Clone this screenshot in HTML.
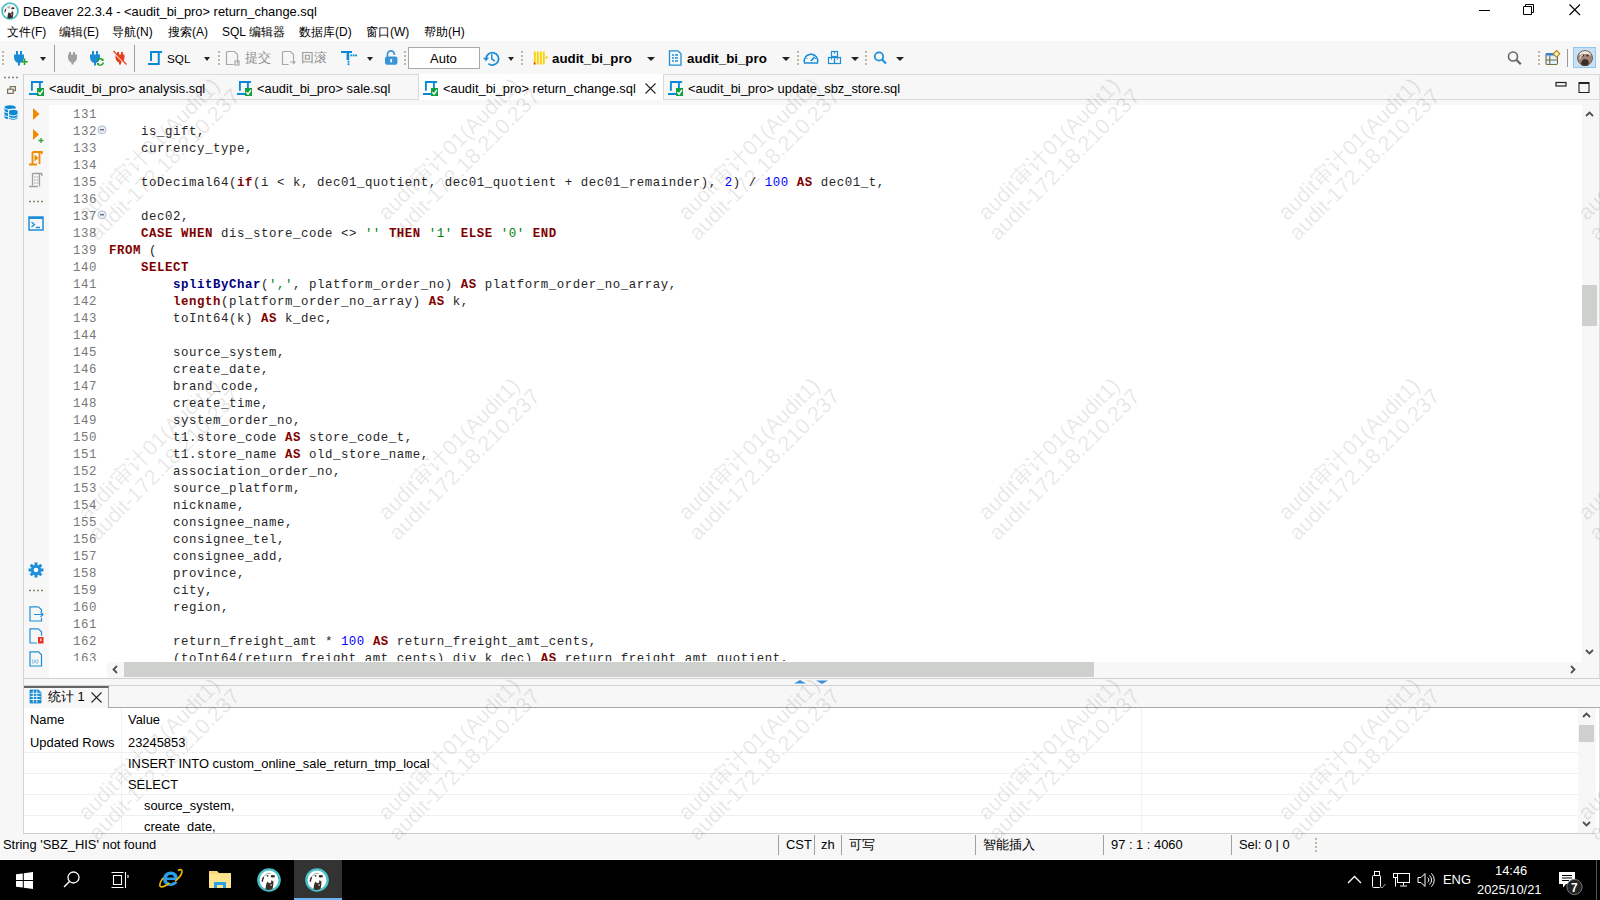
<!DOCTYPE html>
<html><head><meta charset="utf-8">
<style>
*{margin:0;padding:0;box-sizing:border-box}
html,body{width:1600px;height:900px;overflow:hidden;background:#fff;font-family:"Liberation Sans",sans-serif;font-size:12px;color:#000}
body{position:relative}
.a{position:absolute}
.t{position:absolute;white-space:pre;line-height:14px}
svg{position:absolute;overflow:visible}
.cl{position:absolute;left:0;height:17px;font-family:"Liberation Mono",monospace;font-size:12.4px;letter-spacing:0.56px;line-height:17px;white-space:pre;color:#262626}
.lnum{position:absolute;left:73px;color:#787878}
.ctext{position:absolute;left:109px}
.k{color:#7f0055;font-weight:bold}
.k{color:#800000}
.f{color:#000080;font-weight:bold}
.n{color:#0000ff}
.s{color:#008000}
.sep{position:absolute;width:1px;background:#a0a0a0}
.grip{position:absolute;width:2px;height:14px;background-image:linear-gradient(#c2b7a3 50%,transparent 50%);background-size:2px 4px}
.dd{position:absolute;width:0;height:0;border-left:4px solid transparent;border-right:4px solid transparent;border-top:4px solid #222}
.wm{position:absolute;width:300px;height:50px;text-align:center;font-size:21.5px;line-height:22px;color:rgba(0,0,0,0.1);transform:rotate(-45deg);white-space:nowrap;pointer-events:none}
</style></head><body>
<!-- title bar -->
<svg style="left:1px;top:2px" width="18" height="18" viewBox="0 0 24 24"><circle cx="12" cy="12" r="10.6" fill="#fff" stroke="#4cc0c8" stroke-width="2.4"/><path d="M8.5 21.5c.2-3 .6-5.8 1.8-7.8 1.2 1 2.3 1.5 3.3 1.6l1.2-3.5.6 1.5.9-.8c.3 2.5 0 5.5-.8 8.5-2.3 1-4.8 1.3-7 .5z" fill="#3b2e26"/><path d="M13.6 16.2l1.3.2-.2 1.4-1.2-.2z" fill="#fff"/><ellipse cx="15.8" cy="8.2" rx="2.2" ry="1.3" fill="#3b2e26"/><circle cx="10.6" cy="7.8" r="0.9" fill="#3b2e26"/><path d="M4.8 14c-.4-2.2.2-4.2 1.8-5.5l.6 1.2c-.8 1.2-1.2 2.6-1.2 4z" fill="#3b2e26"/><path d="M7 8.5c1.5-2.5 4-3.5 6.5-3" fill="none" stroke="#8a8a8a" stroke-width="0.8"/></svg>
<div class="t" style="left:23px;top:5px;font-size:12.9px">DBeaver 22.3.4 - &lt;audit_bi_pro&gt; return_change.sql</div>
<svg style="left:1479px;top:10px" width="12" height="2"><rect x="0" y="0" width="11" height="1" fill="#000"/></svg>
<svg style="left:1523px;top:4px" width="12" height="12"><path d="M0.5 2.5h8v8h-8z M2.5 2.5v-2h8v8h-2" fill="none" stroke="#000" stroke-width="1"/></svg>
<svg style="left:1569px;top:4px" width="12" height="12"><path d="M0.5 0.5L11 11M11 0.5L0.5 11" stroke="#000" stroke-width="1.1"/></svg>
<!-- menu -->
<div class="t" style="left:7px;top:25px">文件(F)</div>
<div class="t" style="left:59px;top:25px">编辑(E)</div>
<div class="t" style="left:112px;top:25px">导航(N)</div>
<div class="t" style="left:168px;top:25px">搜索(A)</div>
<div class="t" style="left:222px;top:25px">SQL 编辑器</div>
<div class="t" style="left:299px;top:25px">数据库(D)</div>
<div class="t" style="left:366px;top:25px">窗口(W)</div>
<div class="t" style="left:424px;top:25px">帮助(H)</div>
<!-- toolbar -->
<div class="a" style="left:0;top:41px;width:1600px;height:33px;background:#f7f7f7"></div>
<div class="grip" style="left:2px;top:51px"></div>
<svg style="left:13px;top:50px" width="16" height="16"><rect x="3" y="1" width="2" height="4" fill="#1a8bd5"/><rect x="7" y="1" width="2" height="4" fill="#1a8bd5"/><path d="M1 4.5h10v3c0 3-2 5-4 5.5v2.5h-2v-2.5c-2-.5-4-2.5-4-5.5z" fill="#1a8bd5"/><path d="M11.5 8.5v6.5M8.2 11.8h6.6" stroke="#22a52a" stroke-width="1.6"/></svg>
<div class="dd" style="left:40px;top:57px;border-left-width:3.5px;border-right-width:3.5px"></div>
<div class="sep" style="left:54px;top:45px;height:27px"></div>
<svg style="left:66px;top:50px" width="16" height="16"><rect x="3" y="2" width="2" height="3" fill="#a0a0a0"/><rect x="7" y="2" width="2" height="3" fill="#a0a0a0"/><path d="M2 4.5h9v3c0 3-2 4.5-3.5 5v2h-2v-2c-1.5-.5-3.5-2-3.5-5z" fill="#a0a0a0"/></svg>
<svg style="left:89px;top:50px" width="16" height="16"><rect x="3" y="1" width="2" height="4" fill="#1a8bd5"/><rect x="7" y="1" width="2" height="4" fill="#1a8bd5"/><path d="M1 4.5h10v3c0 3-2 5-4 5.5v2.5h-2v-2.5c-2-.5-4-2.5-4-5.5z" fill="#1a8bd5"/><path d="M8 11.5a3.5 3.5 0 0 1 6-1.5M14.5 12.5a3.5 3.5 0 0 1-6 1.5" fill="none" stroke="#22a52a" stroke-width="1.4"/><path d="M14.5 8.5v2.5h-2.5z M8 15.5v-2.5h2.5z" fill="#22a52a"/></svg>
<svg style="left:112px;top:50px" width="16" height="16"><rect x="5" y="2" width="2" height="3" fill="#e8401c"/><rect x="9" y="2" width="2" height="3" fill="#e8401c"/><path d="M3.5 4.5h9v3c0 3-2 4.5-3.5 5v2h-2v-2c-1.5-.5-3.5-2-3.5-5z" fill="#e8401c"/><path d="M1 1.5L14 15" stroke="#f7f7f7" stroke-width="1.6"/><path d="M1.5 1L14.5 14.5" stroke="#e8401c" stroke-width="1.2"/></svg>
<div class="sep" style="left:134px;top:45px;height:27px"></div>
<svg style="left:147px;top:50px" width="16" height="16"><path d="M4 11V2.1H14.6M11.75 2.1V14.8M1 13.9h11.7" fill="none" stroke="#0a8ad6" stroke-width="2"/><path d="M14 1l1.6 1.1-1.6 1.3z" fill="#0a8ad6"/></svg>
<div class="t" style="left:167px;top:52px;font-size:11.7px">SQL</div>
<div class="dd" style="left:204px;top:57px;border-left-width:3.5px;border-right-width:3.5px"></div>
<div class="grip" style="left:218px;top:51px"></div>
<svg style="left:225px;top:50px" width="16" height="16"><path d="M1.5 1.5h8l3 3v9M1.5 1.5v13h7" fill="none" stroke="#a8a8a8" stroke-width="1.2"/><rect x="10" y="11" width="4" height="4" fill="none" stroke="#a8a8a8" stroke-width="1.2"/></svg>
<div class="t" style="left:245px;top:51px;font-size:12.5px;color:#8c8c8c">提交</div>
<svg style="left:281px;top:50px" width="16" height="16"><path d="M1.5 1.5h8l3 3v5M1.5 1.5v13h6" fill="none" stroke="#a8a8a8" stroke-width="1.2"/><path d="M9 12h5M12 10l2 2-2 2M9.5 15" fill="none" stroke="#a8a8a8" stroke-width="1.1"/></svg>
<div class="t" style="left:301px;top:51px;font-size:12.5px;color:#8c8c8c">回滚</div>
<svg style="left:340px;top:50px" width="17" height="16"><rect x="1" y="1" width="11" height="2" fill="#0a8ad6"/><rect x="6.6" y="1" width="2.6" height="9" fill="#0a8ad6"/><g fill="#0a8ad6"><rect x="7.6" y="10.8" width="1.8" height="1.8"/><rect x="7.6" y="13.3" width="1.8" height="1.8"/><rect x="10.4" y="4.5" width="1.8" height="1.8"/><rect x="12.8" y="4.5" width="1.8" height="1.8"/><rect x="15.2" y="4.5" width="1.8" height="1.8"/></g></svg>
<div class="dd" style="left:367px;top:57px;border-left-width:3.5px;border-right-width:3.5px"></div>
<svg style="left:384px;top:50px" width="14" height="16"><path d="M3.5 7v-2.8a3.4 3.4 0 0 1 6.8 0v.8" fill="none" stroke="#3a94d8" stroke-width="1.7"/><rect x="1" y="6.4" width="12.4" height="8.4" rx="2" fill="#3a94d8"/><rect x="6.3" y="9" width="1.8" height="3.2" fill="#fff"/></svg>
<div class="grip" style="left:404px;top:51px"></div>
<div class="a" style="left:408px;top:47px;width:72px;height:22px;background:#fff;border:1px solid #a8a8a8"></div>
<div class="t" style="left:430px;top:52px;font-size:13px">Auto</div>
<svg style="left:483px;top:50px" width="18" height="16"><path d="M3.2 9a6.2 6.2 0 1 1 2.2 4.6" fill="none" stroke="#1d8fd8" stroke-width="1.8"/><path d="M0 7.8h6l-3 3.5z" fill="#1d8fd8"/><path d="M8.8 4.2v4.6l3 2.4" fill="none" stroke="#1d8fd8" stroke-width="1.5"/></svg>
<div class="dd" style="left:508px;top:57px;border-left-width:3.5px;border-right-width:3.5px"></div>
<div class="grip" style="left:521px;top:51px"></div>
<svg style="left:533px;top:50px" width="16" height="16"><path d="M1.8 1.5v13M4.8 1.5v13M7.8 1.5v13M10.8 1.5v13" stroke="#fcd200" stroke-width="1.9"/><rect x="0.8" y="12.5" width="1.5" height="2" fill="#e02020"/><rect x="12.5" y="6.5" width="2" height="2" fill="#f5c400"/></svg>
<div class="t" style="left:552px;top:52px;font-size:13.3px;font-weight:bold">audit_bi_pro</div>
<div class="dd" style="left:647px;top:57px"></div>
<svg style="left:668px;top:50px" width="16" height="16"><path d="M1.5 0.8h8.5l3 3v11.4h-11.5z" fill="none" stroke="#1d8fd8" stroke-width="1.3"/><path d="M4 5h2M7 5h3M4 8h2M7 8h3M4 11h2M7 11h3" stroke="#1d8fd8" stroke-width="1.3"/></svg>
<div class="t" style="left:687px;top:52px;font-size:13.3px;font-weight:bold">audit_bi_pro</div>
<div class="dd" style="left:782px;top:57px"></div>
<div class="grip" style="left:797px;top:51px"></div>
<svg style="left:803px;top:50px" width="16" height="16"><path d="M1.5 13a6.8 6.8 0 1 1 13 0z" fill="none" stroke="#1d8fd8" stroke-width="1.5"/><path d="M8 11l3.5-4" stroke="#1d8fd8" stroke-width="1.8"/><path d="M3.5 8.5h1M12 8.5h1M8 3.5v1M5 5l.7.7M11 5l-.7.7" stroke="#1d8fd8" stroke-width="1"/></svg>
<svg style="left:827px;top:50px" width="16" height="16"><rect x="4.5" y="1.5" width="6" height="5" fill="none" stroke="#1d8fd8" stroke-width="1.2"/><rect x="1.5" y="7.5" width="6" height="6" fill="none" stroke="#1d8fd8" stroke-width="1.2"/><rect x="7.5" y="7.5" width="6" height="6" fill="none" stroke="#1d8fd8" stroke-width="1.2"/><path d="M7.5 1.5v2M4.5 7.5v2M10.5 7.5v2" stroke="#1d8fd8" stroke-width="1.2"/></svg>
<div class="dd" style="left:851px;top:57px"></div>
<div class="grip" style="left:865px;top:51px"></div>
<svg style="left:873px;top:50px" width="16" height="16"><circle cx="6" cy="6.5" r="4.2" fill="none" stroke="#1d8fd8" stroke-width="1.8"/><path d="M9 9.5l4 4" stroke="#1d8fd8" stroke-width="2.2"/></svg>
<div class="dd" style="left:896px;top:57px"></div>
<svg style="left:1507px;top:50px" width="16" height="16"><circle cx="6" cy="6.5" r="4.5" fill="none" stroke="#666" stroke-width="1.6"/><path d="M9.3 9.8l4.5 4.5" stroke="#666" stroke-width="2.2"/></svg>
<div class="grip" style="left:1538px;top:51px"></div>
<svg style="left:1545px;top:50px" width="16" height="16"><rect x="1" y="3.5" width="11.5" height="11" rx="1.2" fill="#dff0fa" stroke="#7a6a48" stroke-width="1.1"/><rect x="1" y="3" width="9" height="2.5" fill="#3a80d0"/><path d="M1 10h11.5M4.8 5.5v9" stroke="#7a6a48" stroke-width="1.1"/><path d="M11.5 0.5l3.3 3.3-3.3 3.3-3.3-3.3z" fill="#fff4c8" stroke="#b08a10" stroke-width="1.1"/></svg>
<div class="sep" style="left:1567px;top:49px;height:18px;background:#999"></div>
<div class="a" style="left:1573px;top:47px;width:23px;height:21px;background:#c8e0f4;border:1px solid #90c8f0"></div>
<svg style="left:1577px;top:50px" width="16" height="16"><circle cx="8" cy="8" r="7.5" fill="#a08676"/><path d="M1.5 6c1-3.5 3.5-5.5 6.5-5.5s5.5 2 6.5 5.5c-2-1.5-4-2-6.5-2s-4.5.5-6.5 2z" fill="#efe6da"/><path d="M4 15c0-3 1-5 3-6l4 1c1 2 1 4 0 5.5-2 .8-5 .8-7-.5z" fill="#3a2c24"/><circle cx="6" cy="5.5" r="1" fill="#222"/><circle cx="10.5" cy="5.5" r="1" fill="#222"/><path d="M3 9c0-2 1-3.5 3-4" fill="none" stroke="#fff" stroke-width="1"/><circle cx="8" cy="8" r="7.5" fill="none" stroke="#5a4a40" stroke-width="0.8"/></svg>

<!-- tabs row -->
<div class="a" style="left:24px;top:74px;width:1576px;height:26px;background:#f7f7f7;border-top:1px solid #dadada;border-bottom:1px solid #dadada"></div>
<div class="a" style="left:418px;top:74px;width:246px;height:27px;background:#fff;border-left:1px solid #dadada;border-right:1px solid #dadada"></div>
<svg style="left:28px;top:79px" width="17" height="17"><path d="M3.9 11.8V3H14.6M11.9 3v6.5M1 15h8.5" fill="none" stroke="#0a8ad6" stroke-width="1.9"/><path d="M14 2l1.6 1-1.6 1.2z" fill="#0a8ad6"/><rect x="9" y="9" width="7" height="8" fill="#12a040"/><path d="M10.3 13.2l1.8 2 2.8-4.2" fill="none" stroke="#fff" stroke-width="1.4"/></svg>
<div class="t" style="left:49px;top:82px;font-size:12.9px">&lt;audit_bi_pro&gt; analysis.sql</div>
<svg style="left:236px;top:79px" width="17" height="17"><path d="M3.9 11.8V3H14.6M11.9 3v6.5M1 15h8.5" fill="none" stroke="#0a8ad6" stroke-width="1.9"/><path d="M14 2l1.6 1-1.6 1.2z" fill="#0a8ad6"/><rect x="9" y="9" width="7" height="8" fill="#12a040"/><path d="M10.3 13.2l1.8 2 2.8-4.2" fill="none" stroke="#fff" stroke-width="1.4"/></svg>
<div class="t" style="left:257px;top:82px;font-size:12.9px">&lt;audit_bi_pro&gt; sale.sql</div>
<svg style="left:422px;top:79px" width="17" height="17"><path d="M3.9 11.8V3H14.6M11.9 3v6.5M1 15h8.5" fill="none" stroke="#0a8ad6" stroke-width="1.9"/><path d="M14 2l1.6 1-1.6 1.2z" fill="#0a8ad6"/><rect x="9" y="9" width="7" height="8" fill="#12a040"/><path d="M10.3 13.2l1.8 2 2.8-4.2" fill="none" stroke="#fff" stroke-width="1.4"/></svg>
<div class="t" style="left:443px;top:82px;font-size:12.9px">&lt;audit_bi_pro&gt; return_change.sql</div>
<svg style="left:645px;top:83px" width="11" height="11"><path d="M0.5 0.5L10.5 10.5M10.5 0.5L0.5 10.5" stroke="#222" stroke-width="1.1"/></svg>
<svg style="left:667px;top:79px" width="17" height="17"><path d="M3.9 11.8V3H14.6M11.9 3v6.5M1 15h8.5" fill="none" stroke="#0a8ad6" stroke-width="1.9"/><path d="M14 2l1.6 1-1.6 1.2z" fill="#0a8ad6"/><rect x="9" y="9" width="7" height="8" fill="#12a040"/><path d="M10.3 13.2l1.8 2 2.8-4.2" fill="none" stroke="#fff" stroke-width="1.4"/></svg>
<div class="t" style="left:688px;top:82px;font-size:12.9px">&lt;audit_bi_pro&gt; update_sbz_store.sql</div>
<svg style="left:1555px;top:82px" width="12" height="6"><rect x="1" y="0.5" width="10" height="3.5" fill="none" stroke="#222" stroke-width="1.2"/></svg>
<svg style="left:1578px;top:81px" width="12" height="12"><path d="M1 1.5h10v10h-10z" fill="none" stroke="#222" stroke-width="1.1"/><rect x="1" y="1" width="10" height="2" fill="#222"/></svg>

<!-- left bar -->
<div class="a" style="left:0;top:74px;width:24px;height:760px;background:#f7f7f7;border-right:1px solid #d4d4d4"></div>
<!-- editor -->
<div class="a" style="left:24px;top:100px;width:1576px;height:5px;background:#f7f7f7"></div>
<div class="a" style="left:24px;top:105px;width:25px;height:573px;background:#f7f7f7"></div>
<div id="ed" class="a" style="left:49px;top:105px;width:1533px;height:556px;background:#fff;overflow:hidden">
<div class="a" style="left:-49px;top:-105px;width:1600px;height:900px">
<div class="cl" style="top:107px"><span class="lnum">131</span><span class="ctext"></span></div>
<div class="cl" style="top:124px"><span class="lnum">132</span><span class="ctext">    is_gift,</span></div>
<div class="cl" style="top:141px"><span class="lnum">133</span><span class="ctext">    currency_type,</span></div>
<div class="cl" style="top:158px"><span class="lnum">134</span><span class="ctext"></span></div>
<div class="cl" style="top:175px"><span class="lnum">135</span><span class="ctext">    toDecimal64(<span class="k">if</span>(i &lt; k, dec01_quotient, dec01_quotient + dec01_remainder), <span class="n">2</span>) / <span class="n">100</span> <span class="k">AS</span> dec01_t,</span></div>
<div class="cl" style="top:192px"><span class="lnum">136</span><span class="ctext"></span></div>
<div class="cl" style="top:209px"><span class="lnum">137</span><span class="ctext">    dec02,</span></div>
<div class="cl" style="top:226px"><span class="lnum">138</span><span class="ctext">    <span class="k">CASE</span> <span class="k">WHEN</span> dis_store_code &lt;&gt; <span class="s">''</span> <span class="k">THEN</span> <span class="s">'1'</span> <span class="k">ELSE</span> <span class="s">'0'</span> <span class="k">END</span></span></div>
<div class="cl" style="top:243px"><span class="lnum">139</span><span class="ctext"><span class="k">FROM</span> (</span></div>
<div class="cl" style="top:260px"><span class="lnum">140</span><span class="ctext">    <span class="k">SELECT</span></span></div>
<div class="cl" style="top:277px"><span class="lnum">141</span><span class="ctext">        <span class="f">splitByChar</span>(<span class="s">','</span>, platform_order_no) <span class="k">AS</span> platform_order_no_array,</span></div>
<div class="cl" style="top:294px"><span class="lnum">142</span><span class="ctext">        <span class="k">length</span>(platform_order_no_array) <span class="k">AS</span> k,</span></div>
<div class="cl" style="top:311px"><span class="lnum">143</span><span class="ctext">        toInt64(k) <span class="k">AS</span> k_dec,</span></div>
<div class="cl" style="top:328px"><span class="lnum">144</span><span class="ctext"></span></div>
<div class="cl" style="top:345px"><span class="lnum">145</span><span class="ctext">        source_system,</span></div>
<div class="cl" style="top:362px"><span class="lnum">146</span><span class="ctext">        create_date,</span></div>
<div class="cl" style="top:379px"><span class="lnum">147</span><span class="ctext">        brand_code,</span></div>
<div class="cl" style="top:396px"><span class="lnum">148</span><span class="ctext">        create_time,</span></div>
<div class="cl" style="top:413px"><span class="lnum">149</span><span class="ctext">        system_order_no,</span></div>
<div class="cl" style="top:430px"><span class="lnum">150</span><span class="ctext">        t1.store_code <span class="k">AS</span> store_code_t,</span></div>
<div class="cl" style="top:447px"><span class="lnum">151</span><span class="ctext">        t1.store_name <span class="k">AS</span> old_store_name,</span></div>
<div class="cl" style="top:464px"><span class="lnum">152</span><span class="ctext">        association_order_no,</span></div>
<div class="cl" style="top:481px"><span class="lnum">153</span><span class="ctext">        source_platform,</span></div>
<div class="cl" style="top:498px"><span class="lnum">154</span><span class="ctext">        nickname,</span></div>
<div class="cl" style="top:515px"><span class="lnum">155</span><span class="ctext">        consignee_name,</span></div>
<div class="cl" style="top:532px"><span class="lnum">156</span><span class="ctext">        consignee_tel,</span></div>
<div class="cl" style="top:549px"><span class="lnum">157</span><span class="ctext">        consignee_add,</span></div>
<div class="cl" style="top:566px"><span class="lnum">158</span><span class="ctext">        province,</span></div>
<div class="cl" style="top:583px"><span class="lnum">159</span><span class="ctext">        city,</span></div>
<div class="cl" style="top:600px"><span class="lnum">160</span><span class="ctext">        region,</span></div>
<div class="cl" style="top:617px"><span class="lnum">161</span><span class="ctext"></span></div>
<div class="cl" style="top:634px"><span class="lnum">162</span><span class="ctext">        return_freight_amt * <span class="n">100</span> <span class="k">AS</span> return_freight_amt_cents,</span></div>
<div class="cl" style="top:651px"><span class="lnum">163</span><span class="ctext">        (toInt64(return_freight_amt_cents) div k_dec) <span class="k">AS</span> return_freight_amt_quotient,</span></div>
</div></div>
<!-- vscroll -->
<div class="a" style="left:1582px;top:100px;width:17px;height:578px;background:#f7f7f7"></div>
<div class="a" style="left:1599px;top:74px;width:1px;height:760px;background:#dcdcdc"></div>
<!-- hscroll -->
<div class="a" style="left:49px;top:661px;width:58px;height:17px;background:#fff"></div>
<div class="a" style="left:107px;top:662px;width:1475px;height:16px;background:#f7f7f7"></div>
<div class="a" style="left:124px;top:662px;width:970px;height:15px;background:#cdd0cd"></div>
<div class="a" style="left:24px;top:678px;width:1576px;height:8px;background:#f7f7f7;border-top:1px solid #d0d0d0;border-bottom:1px solid #d0d0d0"></div>
<svg style="left:4px;top:76px" width="16" height="3"><path d="M0 1.5h2M4 1.5h2M8 1.5h2M12 1.5h2" stroke="#8a8478" stroke-width="1.6"/></svg>
<svg style="left:7px;top:86px" width="9" height="8"><rect x="3.2" y="0.6" width="5.2" height="4" fill="none" stroke="#7a7060" stroke-width="1.2"/><rect x="0.6" y="3.2" width="5.6" height="4.2" fill="#f7f7f7" stroke="#7a7060" stroke-width="1.2"/></svg>
<svg style="left:4px;top:105px" width="16" height="16"><path d="M0.5 2.3c0-1.2 2.4-2 5.5-2s5.5.8 5.5 2v10c0 1.2-2.4 2-5.5 2s-5.5-.8-5.5-2z" fill="#0a8ad6"/><path d="M0.5 6c0 1.2 2.4 2 5.5 2M0.5 9.8c0 1.2 2.4 2 5.5 2M0.5 2.6c0 1.2 2.4 2 5.5 2" stroke="#fff" stroke-width="0.9" fill="none"/><path d="M4.5 6.3c0-1.3 2.2-2.2 4.8-2.2s4.8.9 4.8 2.2v6.8c0 1.3-2.2 2.2-4.8 2.2s-4.8-.9-4.8-2.2z" fill="#0a8ad6" stroke="#f7f7f7" stroke-width="1.1"/><path d="M4.5 8.6c0 1.3 2.2 2.2 4.8 2.2s4.8-.9 4.8-2.2M4.5 11.2c0 1.3 2.2 2.2 4.8 2.2s4.8-.9 4.8-2.2" stroke="#fff" stroke-width="0.9" fill="none"/></svg>
<svg style="left:32px;top:107px" width="9" height="14"><path d="M1 1l6.5 6-6.5 6z" fill="#f08a00"/></svg>
<svg style="left:32px;top:128px" width="13" height="16"><path d="M1 1l6 5.5-6 5.5z" fill="#f08a00"/><path d="M9 10v5M6.5 12.5h5" stroke="#3aa040" stroke-width="1.3"/></svg>
<svg style="left:28px;top:150px" width="16" height="16"><path d="M4.5 2h9.5M13.8 1v3M4.5 2v11.5M1 14.5h8M11.5 2v12" fill="none" stroke="#f08a00" stroke-width="1.8"/><path d="M6.5 4.5l4 3.5-4 3.5z" fill="#f08a00"/></svg>
<svg style="left:28px;top:172px" width="16" height="16"><path d="M4.5 1.5h9.5M13.8 1v3M4.5 1.5v12M1 14.5h9M11.5 1.5v13" fill="none" stroke="#a0a0a0" stroke-width="1.3"/><path d="M6 5h1.5M8.5 5h2M6 8h1.5M8.5 8h2M6 11h1.5M8.5 11h2" stroke="#a0a0a0" stroke-width="1"/></svg>
<svg style="left:28px;top:200px" width="16" height="3"><path d="M1 1.5h2M5 1.5h2M9 1.5h2M13 1.5h2" stroke="#8a8470" stroke-width="1.5"/></svg>
<svg style="left:28px;top:216px" width="16" height="15"><rect x="1" y="1" width="14" height="13" fill="none" stroke="#1d8fd8" stroke-width="1.5"/><rect x="1" y="1" width="14" height="2" fill="#1d8fd8"/><path d="M3.5 6l3 2.5-3 2.5M8 11.5h4" fill="none" stroke="#1d8fd8" stroke-width="1.3"/></svg>
<svg style="left:28px;top:562px" width="16" height="16"><g fill="#1d8fd8"><circle cx="8" cy="8" r="5.2"/><rect x="6.5" y="0.5" width="3" height="15"/><rect x="0.5" y="6.5" width="15" height="3"/><rect x="6.5" y="0.5" width="3" height="15" transform="rotate(45 8 8)"/><rect x="6.5" y="0.5" width="3" height="15" transform="rotate(-45 8 8)"/></g><circle cx="8" cy="8" r="2.3" fill="#fff"/></svg>
<svg style="left:28px;top:589px" width="16" height="3"><path d="M1 1.5h2M5 1.5h2M9 1.5h2M13 1.5h2" stroke="#8a8470" stroke-width="1.5"/></svg>
<svg style="left:29px;top:606px" width="15" height="16"><path d="M9.5 0.8h-8.5v14.2h11.5v-3M9.5 0.8l3 3v2" fill="none" stroke="#1d8fd8" stroke-width="1.2"/><path d="M5 8.5h9M11.5 6l2.5 2.5-2.5 2.5" fill="none" stroke="#1d8fd8" stroke-width="1.2"/></svg>
<svg style="left:29px;top:628px" width="15" height="16"><path d="M9.5 0.8h-8.5v14.2h7M9.5 0.8l3 3v4" fill="none" stroke="#1d8fd8" stroke-width="1.2"/><rect x="9" y="9" width="5.5" height="6.5" fill="#e83020"/><rect x="11.2" y="10.5" width="1.2" height="2.5" fill="#fff"/></svg>
<svg style="left:29px;top:651px" width="15" height="16"><path d="M9.5 0.8h-8.5v14.2h11.5v-11.2l-3-3z" fill="none" stroke="#1d8fd8" stroke-width="1.2"/><text x="2.5" y="11.5" font-size="6" fill="#1d8fd8" font-family="Liberation Sans">(x)</text></svg>
<!-- vscroll arrows/thumb -->
<svg style="left:1585px;top:111px" width="9" height="6"><path d="M1 5l3.5-3.5 3.5 3.5" fill="none" stroke="#505050" stroke-width="1.8"/></svg>
<div class="a" style="left:1582px;top:285px;width:15px;height:41px;background:#cdd0cd"></div>
<svg style="left:1585px;top:649px" width="9" height="6"><path d="M1 1l3.5 3.5 3.5-3.5" fill="none" stroke="#505050" stroke-width="1.8"/></svg>
<svg style="left:112px;top:665px" width="6" height="9"><path d="M5 1l-3.5 3.5 3.5 3.5" fill="none" stroke="#505050" stroke-width="1.8"/></svg>
<svg style="left:1570px;top:665px" width="6" height="9"><path d="M1 1l3.5 3.5-3.5 3.5" fill="none" stroke="#505050" stroke-width="1.8"/></svg>
<!-- sash arrows -->
<svg style="left:793px;top:679px" width="14" height="5"><path d="M1 4.5l6-3.5 6 3.5z" fill="#3a8fd8"/></svg>
<svg style="left:815px;top:680px" width="14" height="5"><path d="M1 0.5l6 3.5 6-3.5z" fill="#3a8fd8"/></svg>
<!-- fold markers -->
<svg style="left:97px;top:125px" width="10" height="10"><circle cx="5" cy="4.8" r="4" fill="#e8eef4" stroke="#a8b8c8" stroke-width="0.9"/><path d="M3 4.8h4" stroke="#335" stroke-width="1"/></svg>
<svg style="left:97px;top:210px" width="10" height="10"><circle cx="5" cy="4.8" r="4" fill="#e8eef4" stroke="#a8b8c8" stroke-width="0.9"/><path d="M3 4.8h4" stroke="#335" stroke-width="1"/></svg>

<!-- results panel -->
<div class="a" style="left:24px;top:686px;width:1576px;height:22px;background:#f7f7f7;border-bottom:1px solid #a8a8a8"></div>
<div class="a" style="left:24px;top:686px;width:85px;height:22px;background:#f7f7f7;border-top:2px solid #666;border-right:1px solid #a8a8a8"></div>
<div class="a" style="left:24px;top:708px;width:1554px;height:126px;background:#fff"></div>
<div class="a" style="left:1578px;top:708px;width:18px;height:126px;background:#f7f7f7"></div>
<div class="a" style="left:1579px;top:725px;width:15px;height:17px;background:#cdd0cd"></div>
<svg style="left:30px;top:690px" width="12" height="14"><path d="M0 0h8.5l2.5 2.5v10.5h-11z" fill="#1a8ad6"/><path d="M0 3.3h11M0 6.4h11M0 9.5h11M3.3 0v13M6.8 0v13" stroke="#fff" stroke-width="0.9"/><path d="M0 0h8.5l2.5 2.5v10.5h-11z" fill="none" stroke="#1a8ad6" stroke-width="0.8"/></svg>
<div class="t" style="left:48px;top:690px;font-size:12.9px">统计 1</div>
<svg style="left:91px;top:692px" width="11" height="11"><path d="M0.5 0.5L10.5 10.5M10.5 0.5L0.5 10.5" stroke="#222" stroke-width="1.1"/></svg>
<div class="a" style="left:121px;top:708px;width:1px;height:126px;background:#eef3f7"></div>
<div class="a" style="left:1141px;top:708px;width:1px;height:126px;background:#eef3f7"></div>
<div class="a" style="left:24px;top:752px;width:1554px;height:1px;background:#f0f0f0"></div>
<div class="a" style="left:24px;top:773px;width:1554px;height:1px;background:#f0f0f0"></div>
<div class="a" style="left:24px;top:794px;width:1554px;height:1px;background:#f0f0f0"></div>
<div class="a" style="left:24px;top:815px;width:1554px;height:1px;background:#f0f0f0"></div>
<div class="t" style="left:30px;top:713px;font-size:12.9px">Name</div>
<div class="t" style="left:128px;top:713px;font-size:12.9px">Value</div>
<div class="t" style="left:30px;top:736px;font-size:12.9px">Updated Rows</div>
<div class="t" style="left:128px;top:736px;font-size:12.9px">23245853</div>
<div class="t" style="left:128px;top:757px;font-size:12.9px">INSERT INTO custom_online_sale_return_tmp_local</div>
<div class="t" style="left:128px;top:778px;font-size:12.9px">SELECT</div>
<div class="t" style="left:144px;top:799px;font-size:12.9px">source_system,</div>
<div class="t" style="left:144px;top:820px;font-size:12.9px">create_date,</div>
<svg style="left:1582px;top:712px" width="9" height="6"><path d="M1 5l3.5-3.5 3.5 3.5" fill="none" stroke="#505050" stroke-width="1.8"/></svg>
<svg style="left:1582px;top:821px" width="9" height="6"><path d="M1 1l3.5 3.5 3.5-3.5" fill="none" stroke="#505050" stroke-width="1.8"/></svg>

<!-- status -->
<div class="a" style="left:0;top:834px;width:1600px;height:26px;background:#f7f7f7"></div>
<div class="a" style="left:24px;top:833px;width:1572px;height:1px;background:#d0d0d0"></div>
<div class="a" style="left:0;top:859px;width:1600px;height:1px;background:#fff"></div>
<div class="t" style="left:3px;top:838px;font-size:12.9px">String 'SBZ_HIS' not found</div>
<div class="a" style="left:778px;top:835px;width:1px;height:20px;background:#a0a0a0"></div>
<div class="a" style="left:814px;top:835px;width:1px;height:20px;background:#a0a0a0"></div>
<div class="a" style="left:841px;top:835px;width:1px;height:20px;background:#a0a0a0"></div>
<div class="a" style="left:975px;top:835px;width:1px;height:20px;background:#a0a0a0"></div>
<div class="a" style="left:1103px;top:835px;width:1px;height:20px;background:#a0a0a0"></div>
<div class="a" style="left:1231px;top:835px;width:1px;height:20px;background:#a0a0a0"></div>
<div class="t" style="left:786px;top:838px;font-size:12.9px">CST</div>
<div class="t" style="left:821px;top:838px;font-size:12.9px">zh</div>
<div class="t" style="left:849px;top:838px;font-size:12.9px">可写</div>
<div class="t" style="left:983px;top:838px;font-size:12.9px">智能插入</div>
<div class="t" style="left:1111px;top:838px;font-size:12.9px">97 : 1 : 4060</div>
<div class="t" style="left:1239px;top:838px;font-size:12.9px">Sel: 0 | 0</div>
<div class="grip" style="left:1315px;top:838px;height:14px"></div>

<!-- taskbar -->
<div class="a" style="left:0;top:860px;width:1600px;height:40px;background:#000"></div>
<svg style="left:16px;top:872px" width="17" height="17"><path d="M0 2.3l6.8-.9v6.6h-6.8zM7.8 1.3l9.2-1.3v8h-9.2zM0 9h6.8v6.6l-6.8-.9zM7.8 9h9.2v8l-9.2-1.3z" fill="#fff"/></svg>
<svg style="left:63px;top:871px" width="18" height="18"><circle cx="10.5" cy="6.5" r="5.5" fill="none" stroke="#fff" stroke-width="1.3"/><path d="M6.5 10.5L1 16" stroke="#fff" stroke-width="1.5"/></svg>
<svg style="left:111px;top:872px" width="18" height="16"><path d="M0.5 0.5h12M0.5 15.5h12M2.5 3.5h8v9h-8z M14.5 0v16M17 3v3" fill="none" stroke="#fff" stroke-width="1.1"/></svg>
<svg style="left:159px;top:866px" width="24" height="24"><path d="M12 5.5c-4.5 0-8 3-8 7.5 0 4 3 7 7.5 7 3.2 0 5.8-1.6 7-4h-4c-.8.9-1.9 1.4-3 1.4-2 0-3.5-1.4-3.7-3.3h11c.1-.4.1-.8.1-1.2 0-4.5-3-7.4-6.9-7.4zM8 11.6c.4-1.7 1.8-2.8 3.7-2.8 1.8 0 3.2 1.1 3.5 2.8z" fill="#2aa0e8"/><path d="M19 4.5c2.5-1.5 4.5-1.2 4 1.5-.5 2.5-3 6-7 9.5M4 12c-3 4-4 7.5-2.5 8.5 1.5 1 5-.5 9-3.5" fill="none" stroke="#f0b800" stroke-width="1.6"/></svg>
<svg style="left:208px;top:869px" width="24" height="20"><path d="M1 2h8l2 2h12v15h-22z" fill="#f8d775"/><path d="M1 5h22v14h-22z" fill="#ffe490"/><path d="M6 19v-6h12v6h-3v-3h-6v3z" fill="#2aa0e8"/></svg>
<svg style="left:257px;top:868px" width="24" height="24" viewBox="0 0 24 24"><circle cx="12" cy="12" r="10.6" fill="#fff" stroke="#4cc0c8" stroke-width="2.4"/><path d="M8.5 21.5c.2-3 .6-5.8 1.8-7.8 1.2 1 2.3 1.5 3.3 1.6l1.2-3.5.6 1.5.9-.8c.3 2.5 0 5.5-.8 8.5-2.3 1-4.8 1.3-7 .5z" fill="#3b2e26"/><path d="M13.6 16.2l1.3.2-.2 1.4-1.2-.2z" fill="#fff"/><ellipse cx="15.8" cy="8.2" rx="2.2" ry="1.3" fill="#3b2e26"/><circle cx="10.6" cy="7.8" r="0.9" fill="#3b2e26"/><path d="M4.8 14c-.4-2.2.2-4.2 1.8-5.5l.6 1.2c-.8 1.2-1.2 2.6-1.2 4z" fill="#3b2e26"/><path d="M7 8.5c1.5-2.5 4-3.5 6.5-3" fill="none" stroke="#8a8a8a" stroke-width="0.8"/></svg>
<div class="a" style="left:294px;top:860px;width:48px;height:40px;background:#333"></div>
<div class="a" style="left:294px;top:898px;width:48px;height:2px;background:#6cb4f0"></div>
<svg style="left:305px;top:868px" width="24" height="24" viewBox="0 0 24 24"><circle cx="12" cy="12" r="10.6" fill="#fff" stroke="#4cc0c8" stroke-width="2.4"/><path d="M8.5 21.5c.2-3 .6-5.8 1.8-7.8 1.2 1 2.3 1.5 3.3 1.6l1.2-3.5.6 1.5.9-.8c.3 2.5 0 5.5-.8 8.5-2.3 1-4.8 1.3-7 .5z" fill="#3b2e26"/><path d="M13.6 16.2l1.3.2-.2 1.4-1.2-.2z" fill="#fff"/><ellipse cx="15.8" cy="8.2" rx="2.2" ry="1.3" fill="#3b2e26"/><circle cx="10.6" cy="7.8" r="0.9" fill="#3b2e26"/><path d="M4.8 14c-.4-2.2.2-4.2 1.8-5.5l.6 1.2c-.8 1.2-1.2 2.6-1.2 4z" fill="#3b2e26"/><path d="M7 8.5c1.5-2.5 4-3.5 6.5-3" fill="none" stroke="#8a8a8a" stroke-width="0.8"/></svg>
<svg style="left:1347px;top:875px" width="15" height="9"><path d="M1 8l6.5-6.5 6.5 6.5" fill="none" stroke="#fff" stroke-width="1.3"/></svg>
<svg style="left:1372px;top:871px" width="14" height="18"><rect x="2.5" y="0.5" width="5" height="4" fill="none" stroke="#fff" stroke-width="1"/><rect x="0.5" y="4.5" width="8" height="12" rx="1" fill="none" stroke="#fff" stroke-width="1"/><path d="M8 15l2 2 3.5-4" fill="none" stroke="#aaa" stroke-width="1"/></svg>
<svg style="left:1393px;top:873px" width="18" height="14"><rect x="4.5" y="0.5" width="12" height="9" fill="none" stroke="#fff" stroke-width="1"/><rect x="0.5" y="0.5" width="4" height="4" fill="none" stroke="#fff" stroke-width="1"/><path d="M2.5 4.5v9M10.5 9.5v3M7 13h7" stroke="#fff" stroke-width="1"/></svg>
<svg style="left:1417px;top:872px" width="18" height="16"><path d="M1 5.5h3l4-4v13l-4-4h-3z" fill="none" stroke="#fff" stroke-width="1"/><path d="M10.5 5.5a3 3 0 0 1 0 5M12.5 3.5a6 6 0 0 1 0 9M14.5 1.5a9 9 0 0 1 0 13" fill="none" stroke="#fff" stroke-width="1"/></svg>
<div class="t" style="left:1443px;top:873px;font-size:12.9px;color:#fff">ENG</div>
<div class="t" style="left:1495px;top:864px;font-size:12.9px;color:#fff">14:46</div>
<div class="t" style="left:1477px;top:883px;font-size:12.9px;color:#fff">2025/10/21</div>
<svg style="left:1558px;top:870px" width="28" height="28"><path d="M1 2h16v12h-9l-3 3.5v-3.5h-4z" fill="#fff"/><path d="M4 5.5h10M4 8h10M4 10.5h7" stroke="#000" stroke-width="1.1"/><circle cx="16.5" cy="17" r="7.6" fill="#222" stroke="#777" stroke-width="1"/><text x="13" y="21.5" font-size="12" font-weight="bold" fill="#fff" font-family="Liberation Sans">7</text></svg>
<div class="a" style="left:1596px;top:860px;width:1px;height:40px;background:#555"></div>

<div class="wm" style="left:-291px;top:-166px">audit审计01(Audit1)<br>audit-172.18.210.237</div>
<div class="wm" style="left:9px;top:-166px">audit审计01(Audit1)<br>audit-172.18.210.237</div>
<div class="wm" style="left:309px;top:-166px">audit审计01(Audit1)<br>audit-172.18.210.237</div>
<div class="wm" style="left:609px;top:-166px">audit审计01(Audit1)<br>audit-172.18.210.237</div>
<div class="wm" style="left:909px;top:-166px">audit审计01(Audit1)<br>audit-172.18.210.237</div>
<div class="wm" style="left:1209px;top:-166px">audit审计01(Audit1)<br>audit-172.18.210.237</div>
<div class="wm" style="left:1509px;top:-166px">audit审计01(Audit1)<br>audit-172.18.210.237</div>
<div class="wm" style="left:-291px;top:134px">audit审计01(Audit1)<br>audit-172.18.210.237</div>
<div class="wm" style="left:9px;top:134px">audit审计01(Audit1)<br>audit-172.18.210.237</div>
<div class="wm" style="left:309px;top:134px">audit审计01(Audit1)<br>audit-172.18.210.237</div>
<div class="wm" style="left:609px;top:134px">audit审计01(Audit1)<br>audit-172.18.210.237</div>
<div class="wm" style="left:909px;top:134px">audit审计01(Audit1)<br>audit-172.18.210.237</div>
<div class="wm" style="left:1209px;top:134px">audit审计01(Audit1)<br>audit-172.18.210.237</div>
<div class="wm" style="left:1509px;top:134px">audit审计01(Audit1)<br>audit-172.18.210.237</div>
<div class="wm" style="left:-291px;top:434px">audit审计01(Audit1)<br>audit-172.18.210.237</div>
<div class="wm" style="left:9px;top:434px">audit审计01(Audit1)<br>audit-172.18.210.237</div>
<div class="wm" style="left:309px;top:434px">audit审计01(Audit1)<br>audit-172.18.210.237</div>
<div class="wm" style="left:609px;top:434px">audit审计01(Audit1)<br>audit-172.18.210.237</div>
<div class="wm" style="left:909px;top:434px">audit审计01(Audit1)<br>audit-172.18.210.237</div>
<div class="wm" style="left:1209px;top:434px">audit审计01(Audit1)<br>audit-172.18.210.237</div>
<div class="wm" style="left:1509px;top:434px">audit审计01(Audit1)<br>audit-172.18.210.237</div>
<div class="wm" style="left:-291px;top:734px">audit审计01(Audit1)<br>audit-172.18.210.237</div>
<div class="wm" style="left:9px;top:734px">audit审计01(Audit1)<br>audit-172.18.210.237</div>
<div class="wm" style="left:309px;top:734px">audit审计01(Audit1)<br>audit-172.18.210.237</div>
<div class="wm" style="left:609px;top:734px">audit审计01(Audit1)<br>audit-172.18.210.237</div>
<div class="wm" style="left:909px;top:734px">audit审计01(Audit1)<br>audit-172.18.210.237</div>
<div class="wm" style="left:1209px;top:734px">audit审计01(Audit1)<br>audit-172.18.210.237</div>
<div class="wm" style="left:1509px;top:734px">audit审计01(Audit1)<br>audit-172.18.210.237</div>
<div class="wm" style="left:-291px;top:1034px">audit审计01(Audit1)<br>audit-172.18.210.237</div>
<div class="wm" style="left:9px;top:1034px">audit审计01(Audit1)<br>audit-172.18.210.237</div>
<div class="wm" style="left:309px;top:1034px">audit审计01(Audit1)<br>audit-172.18.210.237</div>
<div class="wm" style="left:609px;top:1034px">audit审计01(Audit1)<br>audit-172.18.210.237</div>
<div class="wm" style="left:909px;top:1034px">audit审计01(Audit1)<br>audit-172.18.210.237</div>
<div class="wm" style="left:1209px;top:1034px">audit审计01(Audit1)<br>audit-172.18.210.237</div>
<div class="wm" style="left:1509px;top:1034px">audit审计01(Audit1)<br>audit-172.18.210.237</div>
</body></html>
